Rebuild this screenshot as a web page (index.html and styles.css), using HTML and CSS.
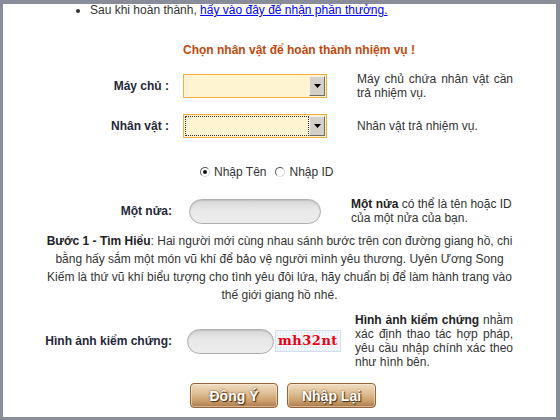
FILE: index.html
```html
<!DOCTYPE html>
<html lang="vi">
<head>
    <meta charset="UTF-8">
    <title>Uyên Ương Song Kiếm</title>
    <link rel="stylesheet" href="styles.css">
</head>
<body>
    <div class="frame">
        <ul class="notes">
            <li>Sau khi hoàn thành, <a href="#">hấy vào đây để nhận phần thưởng.</a></li>
        </ul>

        <div class="title">Chọn nhân vật để hoàn thành nhiệm vụ !</div>

        <div class="row row-server">
            <div class="lbl">Máy chủ :</div>
            <div class="combo">
                <span class="combo-value"></span>
                <span class="combo-arrow"><svg width="7" height="4" viewBox="0 0 7 4"><path d="M0 0h7L3.5 4z" fill="#000"/></svg></span>
            </div>
            <div class="desc">Máy chủ chứa nhân vật cần trả nhiệm vụ.</div>
        </div>

        <div class="row row-char">
            <div class="lbl">Nhân vật :</div>
            <div class="combo focused">
                <span class="combo-value"></span>
                <span class="combo-arrow"><svg width="7" height="4" viewBox="0 0 7 4"><path d="M0 0h7L3.5 4z" fill="#000"/></svg></span>
            </div>
            <div class="desc">Nhân vật trả nhiệm vụ.</div>
        </div>

        <div class="radios">
            <label><input type="radio" name="kind" checked> Nhập Tên</label>
            <label><input type="radio" name="kind"> Nhập ID</label>
        </div>

        <div class="row row-half">
            <div class="lbl">Một nửa:</div>
            <input type="text" class="pill">
            <div class="desc"><b>Một nửa</b> có thể là tên hoặc ID<br>của một nửa của bạn.</div>
        </div>

        <p class="story">
            <b>Bước 1 - Tìm Hiểu</b>: Hai người mới cùng nhau sánh bước trên con đường giang hồ, chi<br>
            bằng hấy sắm một món vũ khí để bảo vệ người mình yêu thương. Uyên Ương Song<br>
            Kiếm là thứ vũ khí biểu tượng cho tình yêu đôi lứa, hãy chuẩn bị để làm hành trang vào<br>
            thế giới giang hồ nhé.
        </p>

        <div class="row row-captcha">
            <div class="lbl">Hình ảnh kiểm chứng:</div>
            <input type="text" class="pill">
            <div class="captcha">mh32nt</div>
            <div class="desc"><b>Hình ảnh kiểm chứng</b> nhằm xác định thao tác hợp pháp, yêu cầu nhập chính xác theo như hình bên.</div>
        </div>

        <div class="buttons">
            <button class="btn">Đồng Ý</button>
            <button class="btn">Nhập Lại</button>
        </div>
    </div>
</body>
</html>
```

FILE: styles.css
```css
body {
    margin: 0;
    font-family: Arial, "Liberation Sans", sans-serif;
    font-size: 12px;
    color: #333;
    background-color: #fff;
}
.frame {
    width: 560px;
    height: 420px;
    box-sizing: border-box;
    border-style: solid;
    border-color: #888d99;
    border-width: 4px 4px 3px 3px;
    overflow: hidden;
}
.notes {
    margin: 0;
    padding: 0 0 0 87px;
    line-height: 13px;
}
.notes a {
    color: #0000ff;
}
.title {
    margin: 26px 0 0 180px;
    line-height: 14px;
    font-weight: bold;
    color: #c1480c;
}
.row {
    display: flex;
    align-items: center;
}
.lbl {
    text-align: right;
    font-weight: bold;
    color: #1f2839;
    flex: none;
}
.desc {
    line-height: 14px;
    text-align: justify;
    flex: none;
}
.desc b {
    color: #222;
}

/* select rows */
.row-server {
    margin-top: 15px;
    height: 28px;
}
.row-char {
    margin-top: 14px;
    height: 24px;
}
.row-server .lbl,
.row-char .lbl {
    width: 166px;
}
.row-server .desc,
.row-char .desc {
    margin-left: 30px;
    width: 156px;
}
.combo {
    display: flex;
    margin-left: 14px;
    width: 144px;
    height: 24px;
    box-sizing: border-box;
    border: 1px solid #f3ad3f;
    background-color: #fff4d2;
    padding: 1px;
}
.combo-value {
    flex: 1;
}
.combo.focused .combo-value {
    border: 1px dotted #333;
}
.combo-arrow {
    width: 16px;
    display: flex;
    align-items: center;
    justify-content: center;
    background-color: #d4d0c8;
    box-sizing: border-box;
    border-style: solid;
    border-width: 1px;
    border-color: #f4f2ee #6f6c66 #6f6c66 #f4f2ee;
}

/* radio choice */
.radios {
    margin-top: 26px;
    padding-left: 197px;
    line-height: 16px;
    display: flex;
    gap: 9px;
}
.radios label {
    display: flex;
    align-items: center;
    gap: 4px;
}
.radios input {
    appearance: none;
    margin: 0;
    width: 10px;
    height: 10px;
    border-radius: 50%;
    border: 1px solid;
    border-color: #5a5a5a #d8d8d8 #d8d8d8 #5a5a5a;
    background-color: #fff;
    display: grid;
    place-items: center;
}
.radios input:checked::after {
    content: "";
    width: 4px;
    height: 4px;
    border-radius: 50%;
    background-color: #111;
}

.pill {
    flex: none;
    height: 25px;
    box-sizing: border-box;
    border: 1px solid #afafaf;
    border-radius: 13px;
    background: linear-gradient(#d7d7d7, #e9e9e9 45%, #ececec);
    box-shadow: inset 0 1px 2px rgba(0, 0, 0, 0.12);
    margin: 0;
    padding: 0 10px;
    font: inherit;
}

.row-half {
    margin-top: 17px;
}
.row-half .lbl {
    width: 169px;
}
.row-half .pill {
    margin-left: 17px;
    width: 132px;
}
.row-half .desc {
    margin-left: 30px;
    width: 180px;
    text-align: left;
    white-space: nowrap;
}

.story {
    margin: 7px 0 0;
    text-align: center;
    line-height: 18px;
}
.story b {
    color: #222;
}

.row-captcha {
    margin-top: 9px;
}
.row-captcha .lbl {
    width: 169px;
}
.row-captcha .pill {
    margin-left: 15px;
    width: 87px;
}
.captcha {
    flex: none;
    margin-left: 1px;
    width: 66px;
    height: 22px;
    box-sizing: border-box;
    border: 1px solid #d3dfec;
    background-color: #f3f7fc;
    background-image: radial-gradient(#d6e3f2 0.6px, transparent 0.7px);
    background-size: 3px 3px;
    font-family: "DejaVu Serif", "Liberation Mono", monospace;
    font-weight: bold;
    font-size: 13px;
    letter-spacing: 0.5px;
    line-height: 20px;
    color: #ee0010;
    text-align: center;
}
.row-captcha .desc {
    margin-left: 14px;
    width: 158px;
}

.buttons {
    margin-top: 14px;
    padding-left: 187px;
    display: flex;
    gap: 9px;
}
.btn {
    width: 88px;
    height: 25px;
    padding: 0;
    border: 1px solid #94643a;
    border-radius: 4px;
    background: linear-gradient(#f1ddc2, #dcbb90 45%, #c99d6b 75%, #a9784a);
    box-shadow: inset 0 0 0 1px rgba(255, 240, 215, 0.5);
    color: #fff;
    font-family: Arial, "Liberation Sans", sans-serif;
    font-size: 14px;
    font-weight: bold;
    text-shadow: 1px 1px 1px #4a2c10, 0 0 2px #6a4520;
    cursor: pointer;
}
.btn + .btn {
    width: 89px;
}
```
